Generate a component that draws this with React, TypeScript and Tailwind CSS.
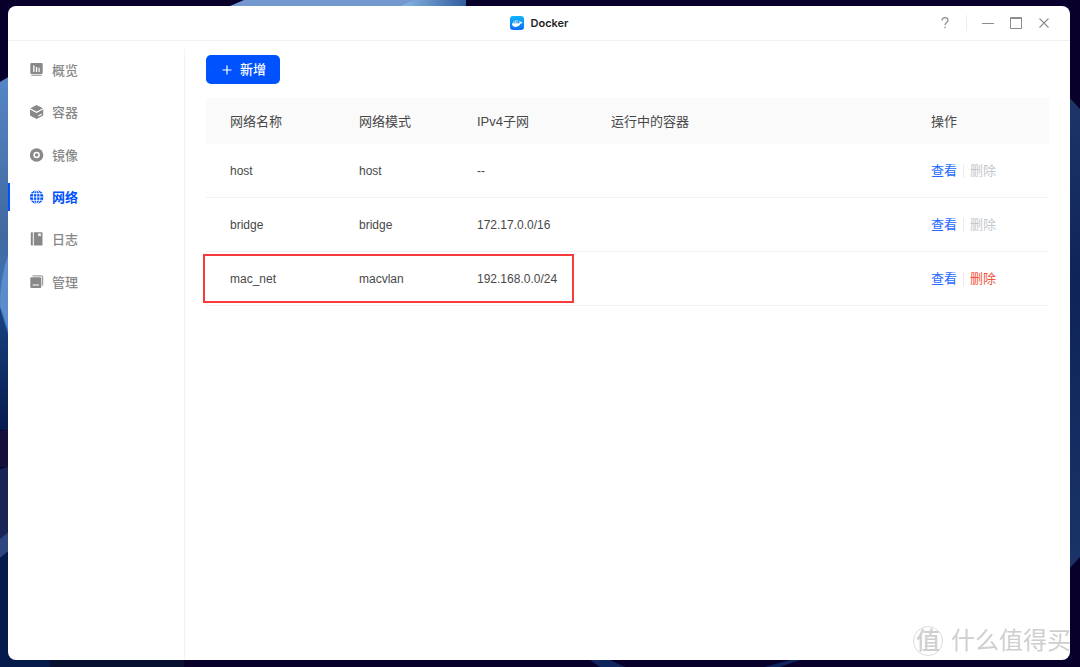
import React, { useState } from 'react';
import clsx from 'clsx';

interface Network {
  name: string;
  mode: string;
  subnet: string;
  containers: string;
  removable: boolean;
}

const networks: Network[] = [
  { name: 'host', mode: 'host', subnet: '--', containers: '', removable: false },
  { name: 'bridge', mode: 'bridge', subnet: '172.17.0.0/16', containers: '', removable: false },
  { name: 'mac_net', mode: 'macvlan', subnet: '192.168.0.0/24', containers: '', removable: true },
];

const OverviewIcon = () => (
  <svg viewBox="0 0 14 14" className="w-[14px] h-[14px]" fill="currentColor">
    <path
      fillRule="evenodd"
      d="M1.5 0h10A1.2 1.2 0 0 1 12.7 1.2v8.6a1.2 1.2 0 0 1-1.2 1.2h-10A1.2 1.2 0 0 1 .3 9.8V1.2A1.2 1.2 0 0 1 1.5 0zM3.2 2.5v6.5h1.3V2.5zM5.9 4v5h1.3V4zM8.5 4.8V9h1.2V4.8z"
    />
    <path d="M1.3 11.7h10.4v1H1.3z" />
  </svg>
);

const ContainerIcon = () => (
  <svg viewBox="0 0 14 14" className="w-[14px] h-[14px]">
    <path d="M6.6 0l6.6 3.4v7.200L6.600 14 0 10.600V3.400z" fill="currentColor" />
    <path d="M0 3.800l6.600 3.500 6.600-3.500M8.400 11l3.300-1.800" fill="none" stroke="white" strokeWidth="1.1" />
  </svg>
);

const ImageIcon = () => (
  <svg viewBox="0 0 14 14" className="w-[14px] h-[14px]">
    <circle cx="6.6" cy="7" r="6.7" fill="currentColor" />
    <circle cx="6.6" cy="7" r="2.5" fill="none" stroke="white" strokeWidth="1.5" />
  </svg>
);

const NetworkIcon = () => (
  <svg viewBox="0 0 14 14" className="w-[14px] h-[14px]">
    <circle cx="6.7" cy="7" r="6.8" fill="currentColor" />
    <g fill="none" stroke="white" strokeWidth="0.9">
      <ellipse cx="6.7" cy="7" rx="3.3" ry="6.8" />
      <path d="M6.7 0v14M0 7h14M.5 3.7h12.5M.5 10.3h12.5" />
    </g>
  </svg>
);

const LogIcon = () => (
  <svg viewBox="0 0 14 14" className="w-[14px] h-[14px]" fill="currentColor">
    <path d="M1.5.2h1.3v13.2H1.5A.7.7 0 0 1 .8 12.7V.9A.7.7 0 0 1 1.5.2z" />
    <path fillRule="evenodd" d="M3.8.2h8a.7.7 0 0 1 .7.7v11.8a.7.7 0 0 1-.7.7h-8zM8.2 1.4v3l1.3-.9 1.3.9v-3z" />
  </svg>
);

const ManageIcon = () => (
  <svg viewBox="0 0 14 14" className="w-[14px] h-[14px]">
    <path d="M2.5.9h9.2a1 1 0 0 1 1 1v8.6" fill="none" stroke="currentColor" strokeWidth="1" />
    <path
      fill="currentColor"
      fillRule="evenodd"
      d="M1.3 2.3h9a1 1 0 0 1 1 1v8.7a1 1 0 0 1-1 1h-9a1 1 0 0 1-1-1V3.3a1 1 0 0 1 1-1zM2.6 9.5v1.1h6.4V9.5z"
    />
  </svg>
);

const DockerLogo = () => (
  <svg viewBox="0 0 14 14" className="w-[14px] h-[14px]">
    <defs>
      <linearGradient id="docker-bg" x1="0" y1="0" x2="0" y2="1">
        <stop offset="0" stopColor="#12b4fb" />
        <stop offset="1" stopColor="#0b6cf5" />
      </linearGradient>
    </defs>
    <rect width="14" height="14" rx="3" fill="url(#docker-bg)" />
    <path
      fill="white"
      d="M2 7.2h7.2c.5-.3.5-1.3 0-1.9l.7-.6c.5.4.8.9.9 1.4.5-.1 1 0 1.5.3-.3.8-1 1.2-1.8 1.2-.9 2.2-2.5 3.3-4.8 3.3C3.2 10.9 1.9 9.5 2 7.2z"
    />
    <path
      fill="white"
      opacity="0.7"
      d="M3 5.5h1.4v1.3H3zM4.7 5.5h1.4v1.3H4.7zM6.4 5.5h1.4v1.3H6.4zM4.7 4.2h1.4v1H4.7zM6.4 4.2h1.4v1H6.4z"
    />
  </svg>
);

const menu = [
  { key: 'overview', label: '概览', icon: <OverviewIcon /> },
  { key: 'container', label: '容器', icon: <ContainerIcon /> },
  { key: 'image', label: '镜像', icon: <ImageIcon /> },
  { key: 'network', label: '网络', icon: <NetworkIcon /> },
  { key: 'log', label: '日志', icon: <LogIcon /> },
  { key: 'manage', label: '管理', icon: <ManageIcon /> },
];

const Wallpaper = () => (
  <svg
    className="absolute inset-0 w-full h-full"
    viewBox="0 0 1080 667"
    preserveAspectRatio="none"
    aria-hidden="true"
  >
    <defs>
      <linearGradient id="wp-left" x1="0" y1="78" x2="0" y2="340" gradientUnits="userSpaceOnUse">
        <stop offset="0" stopColor="#5585c5" />
        <stop offset="0.6" stopColor="#40699f" />
        <stop offset="1" stopColor="#3b7bc9" />
      </linearGradient>
      <linearGradient id="wp-navy" x1="0" y1="320" x2="0" y2="430" gradientUnits="userSpaceOnUse">
        <stop offset="0" stopColor="#173f7d" />
        <stop offset="1" stopColor="#071b4c" />
      </linearGradient>
      <linearGradient id="wp-top" x1="400" y1="0" x2="466" y2="0" gradientUnits="userSpaceOnUse">
        <stop offset="0" stopColor="#8ab8e6" />
        <stop offset="1" stopColor="#315d9d" />
      </linearGradient>
      <linearGradient id="wp-right" x1="0" y1="96" x2="0" y2="570" gradientUnits="userSpaceOnUse">
        <stop offset="0" stopColor="#1d3568" />
        <stop offset="0.4" stopColor="#0e2459" />
        <stop offset="1" stopColor="#1a3468" />
      </linearGradient>
    </defs>
    <rect width="1080" height="667" fill="#08002a" />
    <path d="M230 6L244 0H466V6z" fill="#7399d0" />
    <path d="M401 6L414 0H466V6z" fill="url(#wp-top)" />
    <path d="M0 82L10 76V345L0 310z" fill="url(#wp-left)" />
    <path d="M10 250Q0 275 0 305L10 335z" fill="#5b8dce" />
    <path d="M0 308L10 340V430H0z" fill="url(#wp-navy)" />
    <path d="M0 431L10 429V467H0z" fill="#150f3c" />
    <path d="M0 469L10 466V535L0 542z" fill="#1a2454" />
    <path d="M0 539L10 531V550L0 558z" fill="#2d4680" />
    <path d="M0 558L10 550V655H50V667H0z" fill="#06194b" />
    <path d="M50 655H184V667H50z" fill="#07102f" />
    <path d="M600 667L590 660H610L625 667zM765 667L790 660H800L780 667z" fill="#10245d" />
    <path d="M1068 96L1080 109V557L1068 570z" fill="url(#wp-right)" />
  </svg>
);

const TitleBar = () => (
  <header className="grid grid-cols-[1fr_auto_1fr] items-center h-[35px] border-b border-[#f0f0f0] shrink-0">
    <div />
    <div className="flex items-center gap-[7px]">
      <DockerLogo />
      <h1 className="font-['Inter',sans-serif] text-[11px] leading-4 font-semibold text-[#1f1f1f]">Docker</h1>
    </div>
    <div className="flex items-center justify-end pr-5 text-[#8c8c8c]">
      <button aria-label="帮助" className="w-3 h-4 mr-[15px]">
        <svg viewBox="0 0 12 16" className="w-3 h-4" fill="none" stroke="currentColor" strokeWidth="1.2">
          <path d="M3 5.5C3 3.5 4.3 2.6 6 2.6s3 1 3 2.7c0 2.2-3 2.2-3 4.9" />
          <path d="M6 11.8v1.5" />
        </svg>
      </button>
      <span className="w-px h-4 bg-[#ececec] mr-[15px]" />
      <div className="flex items-center gap-4">
        <button aria-label="最小化" className="w-3 h-3">
          <svg viewBox="0 0 12 12" className="w-3 h-3" stroke="currentColor">
            <path d="M0 6.5h12" />
          </svg>
        </button>
        <button aria-label="最大化" className="w-3 h-3">
          <svg viewBox="0 0 12 12" className="w-3 h-3" fill="none" stroke="currentColor">
            <path d="M.5.5h11v11H.5zM0 1.5h12" />
          </svg>
        </button>
        <button aria-label="关闭" className="w-3 h-3">
          <svg viewBox="0 0 12 12" className="w-3 h-3" stroke="currentColor" strokeWidth="1.1">
            <path d="M1.5 1.5l9 9M10.5 1.5l-9 9" />
          </svg>
        </button>
      </div>
    </div>
  </header>
);

const App: React.FC = () => {
  const [active, setActive] = useState('network');

  return (
    <div className="relative min-h-screen flex pt-[6px] pr-[10px] pb-[7px] pl-2 font-['Liberation_Sans','Noto_Sans_CJK_SC',sans-serif] text-[13px] leading-5">
      <Wallpaper />

      <div className="relative flex-1 min-w-0 flex flex-col bg-white rounded-lg overflow-hidden">
        <TitleBar />

        <div className="flex flex-1">
          <nav className="w-[177px] shrink-0 mt-2 border-r border-[#f2f2f2]">
            <ul className="grid grid-rows-6 h-[254px]">
              {menu.map((item) => (
                <li key={item.key} className="flex items-center">
                  <button
                    onClick={() => setActive(item.key)}
                    className={clsx(
                      'flex items-center gap-2 w-full h-7 pl-5 border-l-2',
                      active === item.key
                        ? 'border-[#0052ff] text-[#0052ff] font-bold'
                        : 'border-transparent text-[#888888] font-medium'
                    )}
                  >
                    {item.icon}
                    <span className="pt-[2px]">{item.label}</span>
                  </button>
                </li>
              ))}
            </ul>
          </nav>

          <main className="flex-1 min-w-0 pt-[14px] px-[21px]">
            <button className="flex items-center gap-2 h-[29px] pl-4 pr-[14px] rounded-[5px] bg-[#0052ff] text-white font-medium">
              <svg viewBox="0 0 10 10" className="w-[10px] h-[10px]" stroke="currentColor" strokeWidth="1.2">
                <path d="M.5 5h9M5 .5v9" />
              </svg>
              <span className="pt-px">新增</span>
            </button>

            <div className="relative mt-[14px]">
              <table className="w-full table-fixed border-separate border-spacing-0 text-left text-[#484848]">
                <colgroup>
                  <col className="w-[129px]" />
                  <col className="w-[118px]" />
                  <col className="w-[134px]" />
                  <col />
                  <col className="w-[142px]" />
                </colgroup>
                <thead>
                  <tr className="h-[46px] bg-[#fafafa] [&>th]:pl-6 [&>th]:pt-[2px] [&>th]:font-normal">
                    <th>网络名称</th>
                    <th>网络模式</th>
                    <th>IPv4子网</th>
                    <th>运行中的容器</th>
                    <th>操作</th>
                  </tr>
                </thead>
                <tbody>
                  {networks.map((net) => (
                    <tr
                      key={net.name}
                      className="h-[54px] text-xs [&>td]:pl-6 [&>td]:pt-px [&>td]:border-b [&>td]:border-[#f2f2f2]"
                    >
                      <td>{net.name}</td>
                      <td>{net.mode}</td>
                      <td>{net.subnet}</td>
                      <td>{net.containers}</td>
                      <td>
                        <div className="flex items-center text-[13px] leading-5">
                          <button className="text-[#2468ff]">查看</button>
                          <span className="w-px h-[14px] mx-[6px] bg-[#ececec]" />
                          <button
                            disabled={!net.removable}
                            className={net.removable ? 'text-[#f5533d]' : 'text-[#c4c7cc]'}
                          >
                            删除
                          </button>
                        </div>
                      </td>
                    </tr>
                  ))}
                </tbody>
              </table>

              {/* highlight around the macvlan network */}
              <div className="absolute -left-[3px] top-[156px] w-[371px] h-[49px] border-2 border-[#f53b3b] pointer-events-none" />
            </div>
          </main>
        </div>
      </div>

      {/* watermark */}
      <div className="absolute right-[9px] bottom-[10px] flex items-center gap-2 text-[#cfcfcf] text-[24px] leading-8 pointer-events-none">
        <span className="flex items-center justify-center w-[30px] h-[30px] rounded-full border border-[#dcdcdc] font-medium">
          值
        </span>
        <span>什么值得买</span>
      </div>
    </div>
  );
};

export default App;
